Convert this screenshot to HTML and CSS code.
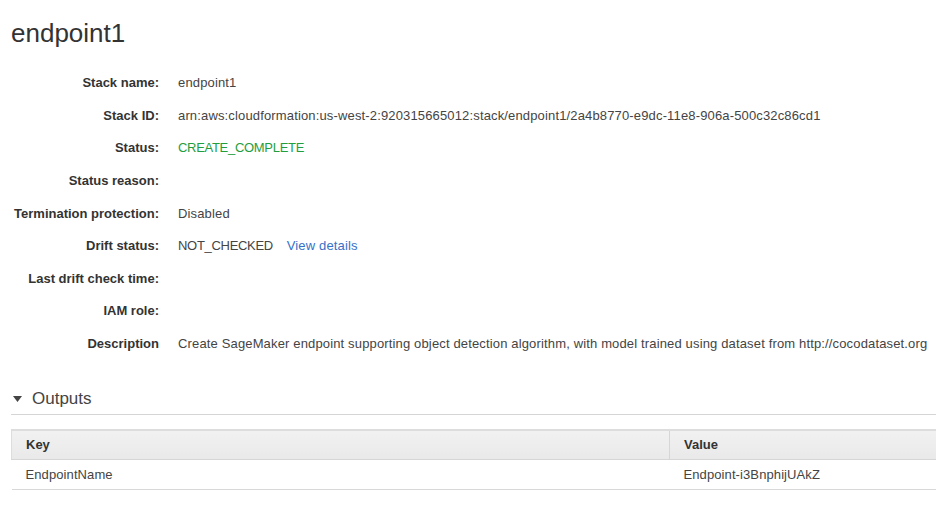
FILE: index.html
```html
<!DOCTYPE html>
<html>
<head>
<meta charset="utf-8">
<link rel="stylesheet" href="styles.css">
</head>
<body>
<div class="page">
  <h1 class="title">endpoint1</h1>
  <div class="details">
    <div class="label">Stack name:</div><div class="value">endpoint1</div>
    <div class="label">Stack ID:</div><div class="value">arn:aws:cloudformation:us-west-2:920315665012:stack/endpoint1/2a4b8770-e9dc-11e8-906a-500c32c86cd1</div>
    <div class="label">Status:</div><div class="value"><span class="caps status-ok">CREATE_COMPLETE</span></div>
    <div class="label">Status reason:</div><div class="value"></div>
    <div class="label">Termination protection:</div><div class="value">Disabled</div>
    <div class="label">Drift status:</div><div class="value"><span class="caps">NOT_CHECKED</span> <a class="link" href="#">View details</a></div>
    <div class="label">Last drift check time:</div><div class="value"></div>
    <div class="label">IAM role:</div><div class="value"></div>
    <div class="label">Description</div><div class="value">Create SageMaker endpoint supporting object detection algorithm, with model trained using dataset from http://cocodataset.org</div>
  </div>

  <h2 class="section-head">
    <svg class="caret" width="9" height="6" viewBox="0 0 9 6"><path d="M0 0 H9 L4.5 6 Z" fill="#444"/></svg>
    <span>Outputs</span>
  </h2>

  <table class="outputs">
    <thead>
      <tr><th class="col-key">Key</th><th class="col-val">Value</th></tr>
    </thead>
    <tbody>
      <tr><td>EndpointName</td><td class="col-val">Endpoint-i3BnphijUAkZ</td></tr>
    </tbody>
  </table>
</div>
</body>
</html>
```
FILE: styles.css
```css
html, body {
  margin: 0;
  padding: 0;
  background: #ffffff;
}
body {
  font-family: "Liberation Sans", Arial, Helvetica, sans-serif;
  color: #444444;
  overflow: hidden;
}
.page {
  padding: 18px 0 0 11px;
}
.title {
  margin: 0;
  font-size: 26px;
  line-height: 30px;
  font-weight: normal;
  color: #333333;
}
.details {
  display: grid;
  grid-template-columns: 148px auto;
  grid-auto-rows: 32.625px;
  column-gap: 19px;
  align-items: center;
  margin-top: 18.7px;
  font-size: 13px;
  line-height: 16px;
}
.label {
  text-align: right;
  font-weight: bold;
  color: #333333;
  white-space: nowrap;
}
.value {
  color: #444444;
  white-space: nowrap;
  letter-spacing: 0.15px;
}
.caps {
  letter-spacing: -0.3px;
}
.status-ok {
  color: #1f9e40;
}
.link {
  color: #3571c9;
  text-decoration: none;
  margin-left: 10px;
}
.section-head {
  display: flex;
  align-items: center;
  gap: 10px;
  margin: 28.7px 0 0 0;
  padding: 0 0 5px 2px;
  font-size: 17px;
  line-height: 20px;
  font-weight: normal;
  color: #444444;
  border-bottom: 1px solid #d5d5d5;
}
.caret {
  display: block;
}
.outputs {
  margin-top: 14px;
  width: 100%;
  border-collapse: collapse;
  font-size: 13px;
  line-height: 16px;
}
.outputs th {
  text-align: left;
  font-weight: bold;
  color: #333333;
  height: 28px;
  padding: 0 14px;
  background: linear-gradient(#f1f1f1, #e9e9e9);
  border-top: 2px solid #dddddd;
  border-bottom: 1px solid #d6d6d6;
}
.outputs th.col-key {
  width: 629px;
  border-left: 1px solid #dddddd;
}
.outputs th.col-val {
  border-left: 1px solid #d6d6d6;
}
.outputs td {
  height: 29px;
  padding: 0 14px;
  color: #444444;
  border-bottom: 1px solid #d8d8d8;
  letter-spacing: 0.1px;
}
.outputs td.col-val {
  padding-left: 14px;
}
```
